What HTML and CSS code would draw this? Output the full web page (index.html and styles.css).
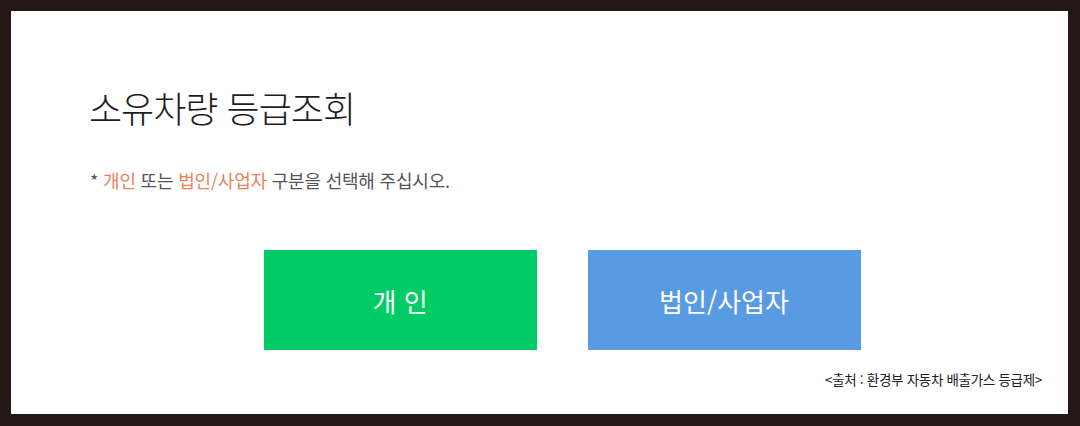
FILE: index.html
```html
<!DOCTYPE html>
<html lang="ko">
<head>
<meta charset="utf-8">
<link rel="stylesheet" href="styles.css">
</head>
<body>
<div class="frame">
  <div class="panel">
    <h1 class="title">소유차량 등급조회</h1>
    <p class="note">* <span class="hl">개인</span> 또는 <span class="hl">법인/사업자</span> 구분을 선택해 주십시오.</p>
    <div class="buttons">
      <div class="btn btn-green">개 인</div>
      <div class="btn btn-blue">법인/사업자</div>
    </div>
    <p class="source">&lt;출처 : 환경부 자동차 배출가스 등급제&gt;</p>
  </div>
</div>
</body>
</html>
```
FILE: styles.css
```css
html, body {
  margin: 0;
  padding: 0;
  background: #231815;
}
.frame {
  width: 1080px;
  height: 426px;
  box-sizing: border-box;
  padding: 11px 12px 12px 11px;
}
.panel {
  background: #fff;
  height: 403px;
  box-sizing: border-box;
  display: flex;
  flex-direction: column;
  font-family: "Noto Sans CJK KR", "Noto Sans", sans-serif;
}
.title {
  margin: 72px 0 0 78px;
  font-size: 36px;
  font-weight: 300;
  line-height: 48px;
  color: #1e1e1e;
  letter-spacing: -1px;
}
.note {
  margin: 37px 0 0 79px;
  font-size: 18px;
  line-height: 24px;
  color: #555;
  letter-spacing: -0.2px;
}
.hl {
  color: #e8835a;
}
.buttons {
  display: flex;
  justify-content: center;
  gap: 51px;
  margin-top: 58px;
  padding-left: 45px;
}
.btn {
  width: 273px;
  height: 100px;
  display: flex;
  align-items: center;
  justify-content: center;
  color: #fff;
  font-size: 26px;
}
.btn-green {
  background: #00cc66;
}
.btn-blue {
  background: #589be3;
}
.source {
  margin: 20px 26px 0 0;
  text-align: right;
  font-size: 13.5px;
  line-height: 18px;
  color: #222;
  letter-spacing: -0.3px;
}
```
